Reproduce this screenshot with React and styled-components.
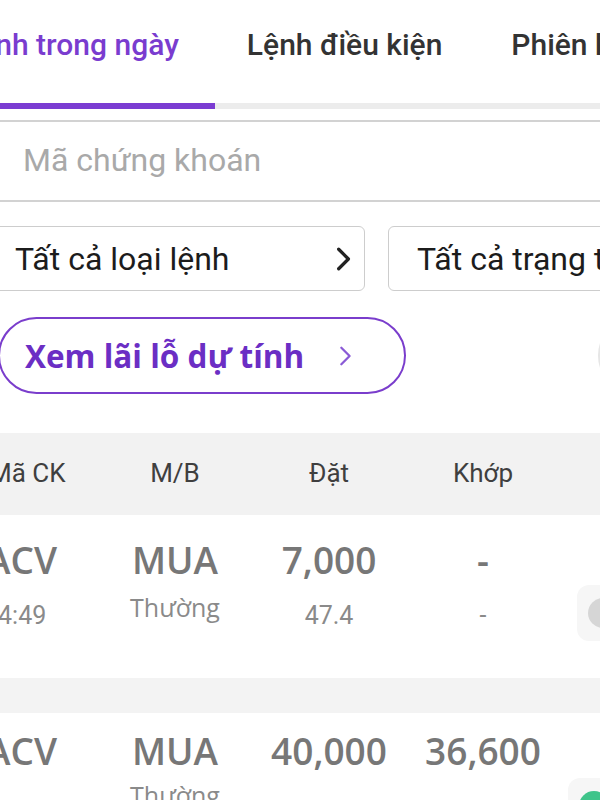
import React from "react";
import styled, { createGlobalStyle } from "styled-components";

const Global = createGlobalStyle`
  html, body { margin: 0; padding: 0; background: #fff; }
  body { width: 600px; height: 800px; overflow: hidden; font-family: Roboto, "Noto Sans", sans-serif; }
  * { box-sizing: border-box; }
`;

const Page = styled.div`
  width: 600px;
  height: 800px;
  overflow: hidden;
  display: flex;
  flex-direction: column;
  background: #fff;
  & > * { flex: none; }
`;

const Tabs = styled.div`
  display: flex;
  align-items: center;
  height: 103px;
  padding-bottom: 14px;
  white-space: nowrap;
`;

const Tab = styled.div`
  font-size: 30px;
  font-weight: 500;
  color: ${(p) => (p.$active ? "#7a3ccf" : "#333")};
  margin-left: ${(p) => p.$ml || 0}px;
  flex: none;
`;

const Track = styled.div`
  height: 6px;
  background: #ececec;
  display: flex;
`;

const Indicator = styled.div`
  width: 215px;
  height: 6px;
  background: #7b3cd2;
`;

const SearchBox = styled.div`
  margin: 11px -12px 0;
  height: 82px;
  border: 2px solid #d2d2d2;
  border-radius: 8px;
  display: flex;
  align-items: center;
  padding-left: 33px;
  padding-bottom: 2px;
  font-size: 32px;
  color: #a9a9a9;
  white-space: nowrap;
`;

const Filters = styled.div`
  display: flex;
  gap: 23px;
  margin: 24px -20px 0;
`;

const Select = styled.div`
  flex: none;
  width: ${(p) => p.$w}px;
  height: 65px;
  border: 1.5px solid #cdcdcd;
  border-radius: 6px;
  display: flex;
  align-items: center;
  justify-content: space-between;
  padding: 0 8px 0 ${(p) => p.$pl}px;
  font-size: 32px;
  color: #1c1c1c;
  white-space: nowrap;
  overflow: hidden;
`;

const PillRow = styled.div`
  display: flex;
  gap: 192px;
  margin: 26px 0 0 -2px;
`;

const Pill = styled.div`
  flex: none;
  width: 408px;
  height: 77px;
  border: 2.5px solid ${(p) => (p.$ghost ? "#e6e6e6" : "#7a3dcc")};
  border-radius: 40px;
  display: flex;
  align-items: center;
  gap: 30px;
  padding-left: 25px;
  font-family: "Open Sans", "Noto Sans", sans-serif;
  font-size: 31.5px;
  font-weight: 700;
  color: #6b2ec4;
  white-space: nowrap;
`;

const columns = "118px 154px 154px 154px 1fr";

const TableHead = styled.div`
  margin-top: 39px;
  height: 82px;
  background: #f2f2f2;
  display: grid;
  grid-template-columns: ${columns};
  align-items: center;
  margin-left: -20px;
  padding-bottom: 2px;
  font-size: 26px;
  color: #3f3f3f;
  white-space: nowrap;
`;

const HeadCell = styled.div`
  text-align: ${(p) => (p.$left ? "left" : "center")};
  padding-left: ${(p) => (p.$left ? 9 : 0)}px;
`;

const Row = styled.div`
  display: grid;
  grid-template-columns: ${columns};
  grid-template-rows: auto auto;
  align-content: start;
  margin-left: -20px;
  padding-top: ${(p) => p.$pt}px;
  height: ${(p) => p.$h}px;
  white-space: nowrap;
`;

const Big = styled.div`
  font-family: "Open Sans", "Noto Sans", sans-serif;
  font-size: 37px;
  font-weight: 600;
  color: #777;
  line-height: 40px;
  text-align: ${(p) => (p.$left ? "left" : "center")};
  padding-left: ${(p) => (p.$left ? 6 : 0)}px;
`;

const Small = styled.div`
  font-size: 25px;
  color: #8a8a8a;
  line-height: 30px;
  margin-top: ${(p) => (p.$type ? 2 : p.$low ? 20 : 11)}px;
  text-align: ${(p) => (p.$left ? "left" : "center")};
  padding-left: ${(p) => (p.$left ? 4 : 0)}px;
  font-family: ${(p) => (p.$type ? '"Open Sans", "Noto Sans", sans-serif' : "Roboto, sans-serif")};
`;

const SwitchBox = styled.div`
  grid-column: 5;
  grid-row: 1 / span 2;
  align-self: start;
  margin-left: ${(p) => p.$ml}px;
  margin-top: ${(p) => p.$mt}px;
  width: 60px;
  height: 56px;
  border-radius: 12px;
  background: #f6f6f6;
  display: flex;
  align-items: center;
  padding-left: 11px;
`;

const Knob = styled.div`
  width: 30px;
  height: 30px;
  border-radius: 50%;
  background: ${(p) => (p.$on ? "#3fc48a" : "#d6d6d6")};
`;

const Gap = styled.div`
  height: 35px;
  background: #f3f3f3;
`;

const Chevron = ({ color = "#222", size = 26, stroke = 3 }) => (
  <svg width={size} height={size} viewBox="0 0 24 24" fill="none" stroke={color} strokeWidth={stroke} strokeLinecap="round" strokeLinejoin="round">
    <path d="M8 3 L17 12 L8 21" />
  </svg>
);

export default function App() {
  return (
    <Page>
      <Global />
      <Tabs>
        <Tab $active $ml={-37}>Lệnh trong ngày</Tab>
        <Tab $ml={68}>Lệnh điều kiện</Tab>
        <Tab $ml={69}>Phiên khác</Tab>
      </Tabs>
      <Track>
        <Indicator />
      </Track>
      <SearchBox>Mã chứng khoán</SearchBox>
      <Filters>
        <Select $w={385} $pl={34}>
          Tất cả loại lệnh
          <Chevron />
        </Select>
        <Select $w={300} $pl={28}>Tất cả trạng thái</Select>
      </Filters>
      <PillRow>
        <Pill>
          Xem lãi lỗ dự tính
          <Chevron color="#8a5ad6" size={22} stroke={2.5} />
        </Pill>
        <Pill $ghost />
      </PillRow>
      <TableHead>
        <HeadCell $left>Mã CK</HeadCell>
        <HeadCell>M/B</HeadCell>
        <HeadCell>Đặt</HeadCell>
        <HeadCell>Khớp</HeadCell>
        <HeadCell />
      </TableHead>
      <Row $pt={25} $h={163}>
        <Big $left>ACV</Big>
        <Big>MUA</Big>
        <Big>7,000</Big>
        <Big>-</Big>
        <Small $left>14:49</Small>
        <Small $type>Thường</Small>
        <Small>47.4</Small>
        <Small>-</Small>
        <SwitchBox $ml={17} $mt={45}>
          <Knob />
        </SwitchBox>
      </Row>
      <Gap />
      <Row $pt={18} $h={200}>
        <Big $left>ACV</Big>
        <Big>MUA</Big>
        <Big>40,000</Big>
        <Big>36,600</Big>
        <Small $left $low>14:49</Small>
        <Small $type>Thường</Small>
        <Small $low>36.6</Small>
        <Small $low>36.6</Small>
        <SwitchBox $ml={8} $mt={47}>
          <Knob $on />
        </SwitchBox>
      </Row>
    </Page>
  );
}
